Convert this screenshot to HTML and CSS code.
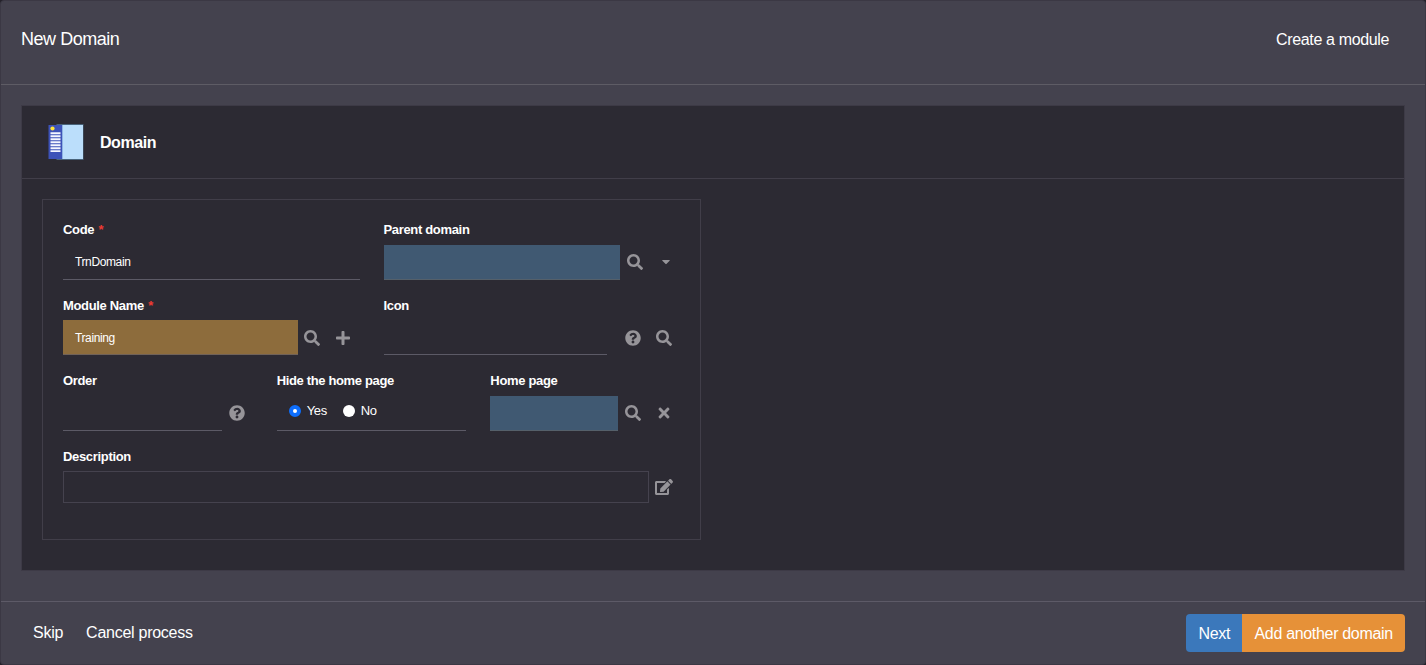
FILE: index.html
```html
<!DOCTYPE html>
<html lang="en">
<head>
<meta charset="utf-8">
<title>New Domain</title>
<link rel="stylesheet" href="styles.css">
</head>
<body>
<svg class="defs" aria-hidden="true">
  <symbol id="search" viewBox="0 0 512 512"><path d="M505 442.7L405.3 343c-4.500-4.500-10.600-7-17-7H372c27.600-35.300 44-79.700 44-128C416 93.100 322.900 0 208 0S0 93.100 0 208s93.100 208 208 208c48.300 0 92.700-16.400 128-44v16.300c0 6.400 2.500 12.500 7 17l99.700 99.700c9.400 9.400 24.600 9.400 33.900 0l28.300-28.300c9.400-9.400 9.400-24.600.1-34zM208 336c-70.700 0-128-57.200-128-128 0-70.700 57.200-128 128-128 70.700 0 128 57.200 128 128 0 70.700-57.200 128-128 128z"/></symbol>
  <symbol id="plus" viewBox="0 0 448 512"><path d="M416 208H272V64c0-17.670-14.330-32-32-32h-32c-17.670 0-32 14.330-32 32v144H32c-17.670 0-32 14.330-32 32v32c0 17.670 14.330 32 32 32h144v144c0 17.670 14.330 32 32 32h32c17.670 0 32-14.330 32-32V304h144c17.670 0 32-14.330 32-32v-32c0-17.670-14.330-32-32-32z"/></symbol>
  <symbol id="help" viewBox="0 0 512 512"><path d="M504 256c0 136.997-111.043 248-248 248S8 392.997 8 256C8 119.083 119.043 8 256 8s248 111.083 248 248zM262.655 90c-54.497 0-89.255 22.957-116.549 63.758-3.536 5.286-2.353 12.415 2.715 16.258l34.699 26.310c5.205 3.947 12.621 3.008 16.665-2.122 17.864-22.658 30.113-35.797 57.303-35.797 20.429 0 45.698 13.148 45.698 32.958 0 14.976-12.363 22.667-32.534 33.976C247.128 238.528 216 254.941 216 296v4c0 6.627 5.373 12 12 12h56c6.627 0 12-5.373 12-12v-1.333c0-28.462 83.186-29.647 83.186-106.667 0-58.002-60.165-102-116.531-102zM256 338c-25.365 0-46 20.635-46 46 0 25.364 20.635 46 46 46s46-20.636 46-46c0-25.365-20.635-46-46-46z"/></symbol>
  <symbol id="caret" viewBox="0 0 320 512"><path d="M31.300 192h257.300c17.800 0 26.700 21.500 14.100 34.100L174.100 354.800c-7.800 7.800-20.500 7.800-28.300 0L17.200 226.100C4.600 213.500 13.500 192 31.300 192z"/></symbol>
  <symbol id="times" viewBox="0 0 352 512"><path d="M242.720 256l100.070-100.070c12.280-12.280 12.280-32.190 0-44.480l-22.240-22.240c-12.280-12.280-32.190-12.280-44.480 0L176 189.280 75.930 89.210c-12.280-12.280-32.190-12.280-44.480 0L9.210 111.450c-12.280 12.280-12.280 32.190 0 44.480L109.280 256 9.210 356.070c-12.280 12.280-12.280 32.190 0 44.480l22.240 22.240c12.280 12.280 32.200 12.280 44.480 0L176 322.720l100.070 100.070c12.280 12.280 32.200 12.280 44.480 0l22.240-22.240c12.280-12.280 12.280-32.190 0-44.480L242.720 256z"/></symbol>
  <symbol id="edit" viewBox="0 0 576 512"><path d="M402.600 83.200l90.200 90.200c3.800 3.800 3.800 10 0 13.800L274.400 405.600l-92.800 10.300c-12.400 1.400-22.900-9.100-21.500-21.500l10.300-92.800L388.800 83.200c3.800-3.800 10-3.800 13.800 0zm162-22.900l-48.800-48.800c-15.200-15.200-39.900-15.200-55.200 0l-35.400 35.400c-3.800 3.800-3.800 10 0 13.800l90.200 90.200c3.800 3.800 10 3.800 13.800 0l35.400-35.400c15.200-15.300 15.200-40 0-55.200zM384 346.200V448H64V128h229.800c3.200 0 6.200-1.300 8.500-3.500l40-40c7.600-7.600 2.200-20.500-8.500-20.500H48C21.500 64 0 85.500 0 112v352c0 26.500 21.500 48 48 48h352c26.500 0 48-21.500 48-48V306.200c0-10.700-12.900-16-20.500-8.500l-40 40c-2.200 2.300-3.500 5.300-3.500 8.500z"/></symbol>
</svg>
<div class="dialog">
  <header class="dialog-head">
    <span class="title">New Domain</span>
    <span class="step">Create a module</span>
  </header>
  <main class="dialog-body">
    <section class="panel">
      <div class="panel-head">
        <svg class="logo" width="36" height="36" viewBox="0 0 36 36">
          <path fill="#49637a" d="M8.500 0H35.500V36H8.500z"/>
          <path fill="#3d52b8" d="M.5 1H14V35H.5z"/>
          <path fill="#8fb4e4" d="M14 1h1v34h-1z"/>
          <path fill="#bbdefb" d="M15 1H35V35H15z"/>
          <circle cx="4.500" cy="4.500" r="2.100" fill="#ffe338"/>
          <path stroke="#f4f6ff" stroke-width="1.900" d="M2.500 9.300h10M2.500 12.200h10M2.500 15.200h10M2.500 18.200h10M2.500 21.200h10M2.500 24.200h10M2.500 27.100h10"/>
        </svg>
        <span class="panel-title">Domain</span>
      </div>
      <div class="panel-body">
        <form class="fieldset">
          <div class="row halves">
            <div class="field"><label>Code <i>*</i></label><div class="control"><span class="input">TrnDomain</span></div></div>
            <div class="field"><label>Parent domain</label><div class="control"><span class="input link"></span><svg class="icon"><use href="#search"/></svg><svg class="icon caret"><use href="#caret"/></svg></div></div>
          </div>
          <div class="row halves module-row">
            <div class="field"><label>Module Name <i>*</i></label><div class="control"><span class="input required">Training</span><svg class="icon near"><use href="#search"/></svg><svg class="icon plus"><use href="#plus"/></svg></div></div>
            <div class="field"><label>Icon</label><div class="control"><span class="input spaced"></span><svg class="icon"><use href="#help"/></svg><svg class="icon"><use href="#search"/></svg></div></div>
          </div>
          <div class="row thirds">
            <div class="field"><label>Order</label><div class="control"><span class="input"></span><svg class="icon"><use href="#help"/></svg></div></div>
            <div class="field"><label class="tight">Hide the home page</label><div class="control"><span class="input choices"><b class="radio on"></b><span>Yes</span><b class="radio"></b><span>No</span></span></div></div>
            <div class="field"><label>Home page</label><div class="control"><span class="input link"></span><svg class="icon"><use href="#search"/></svg><svg class="icon"><use href="#times"/></svg></div></div>
          </div>
          <div class="row">
            <div class="field"><label>Description</label><div class="control"><span class="input area"></span><svg class="icon edit"><use href="#edit"/></svg></div></div>
          </div>
        </form>
      </div>
    </section>
  </main>
  <footer class="dialog-foot">
    <span class="action">Skip</span>
    <span class="action">Cancel process</span>
    <div class="buttons"><span class="btn next">Next</span><span class="btn add">Add another domain</span></div>
  </footer>
</div>
</body>
</html>
```
FILE: styles.css
```css
* { box-sizing: border-box; }
body {
  margin: 0;
  background: #24222a;
  color: #fff;
  font: 16px/20px "Liberation Sans", Arial, sans-serif;
  letter-spacing: -0.32px;
}
.defs { display: none; }
.dialog {
  display: flex;
  flex-direction: column;
  height: 665px;
  border: 1px solid #3b3844;
  border-radius: 4px;
  background: #44424e;
}
.dialog-head {
  display: flex;
  justify-content: space-between;
  height: 84px;
  padding: 28px 36px 0 20px;
  border-bottom: 1px solid #5e5c65;
}
.title { font-size: 18px; letter-spacing: -0.47px; }
.step { padding-top: 1px; letter-spacing: -0.36px; }
.dialog-body { flex: 1; padding: 20px 20px 30px; }
.panel {
  height: 466px;
  border: 1px solid #3d3a46;
  background: #2c2a33;
}
.panel-head {
  display: flex;
  align-items: center;
  gap: 16px;
  height: 73px;
  padding-left: 26px;
  border-bottom: 1px solid #413e49;
}
.panel-title { padding-top: 2px; font-weight: bold; letter-spacing: -0.45px; }
.panel-body { padding: 20px; }
.fieldset {
  width: 659px;
  height: 341px;
  padding: 20px;
  border: 1px solid #413e49;
}
.row { display: grid; width: 617px; height: 75.55px; column-gap: 24px; }
.halves { grid-template-columns: 1fr 1fr; }
.thirds { grid-template-columns: 1fr 1fr 1fr; }
label {
  display: block;
  height: 24.8px;
  font-size: 13px;
  font-weight: bold;
  letter-spacing: -0.33px;
}
.tight { letter-spacing: -0.35px; }
label i { color: #ee3a32; font-style: normal; font-weight: bold; padding-left: 1px; }
.control { display: flex; align-items: center; }
.input {
  display: block;
  flex: 1;
  height: 35px;
  padding: 7px 12px;
  border-bottom: 1px solid #5c5a66;
  font-size: 12px;
  letter-spacing: -0.38px;
}
.link { background: #405972; border-color: #55606a; }
.required { padding-top: 8px; background: #8d6c3c; border-color: #706259; }
.spaced { margin-right: 11px; }
.area { height: 32px; border: 1px solid #45424e; }
.icon {
  width: 16px;
  height: 16px;
  margin: 0 8px 1px 7px;
  fill: #969499;
}
.icon + .icon { margin-left: 7px; }
.icon.near { margin-left: 6.5px; }
.icon.near + .icon { margin-right: 8.5px; }
.module-row .icon { margin-top: 1px; margin-bottom: 0; }
.icon.caret { height: 13px; margin-right: 6.5px; }
.icon.edit { width: 18px; margin: 0 7px 0 6px; }
.choices {
  display: flex;
  align-items: center;
  padding-bottom: 11px;
  font-size: 13px;
  letter-spacing: -0.35px;
}
.radio { width: 12px; height: 12px; border-radius: 50%; background: #fff; }
.radio.on { border: 4px solid #0d6efd; }
.radio + span { margin: 0 16px 0 6px; }
.dialog-foot {
  display: flex;
  align-items: center;
  gap: 23px;
  height: 63px;
  padding: 0 20px 0 32px;
  border-top: 1px solid #5d5a67;
}
.action { letter-spacing: -0.26px; }
.buttons {
  display: flex;
  height: 38px;
  margin-left: auto;
  border-radius: 4px;
  overflow: hidden;
}
.btn { line-height: 39px; padding-left: 12.5px; }
.next { width: 56px; background: #3b78bb; }
.add { width: 163px; background: #e69138; }
```
